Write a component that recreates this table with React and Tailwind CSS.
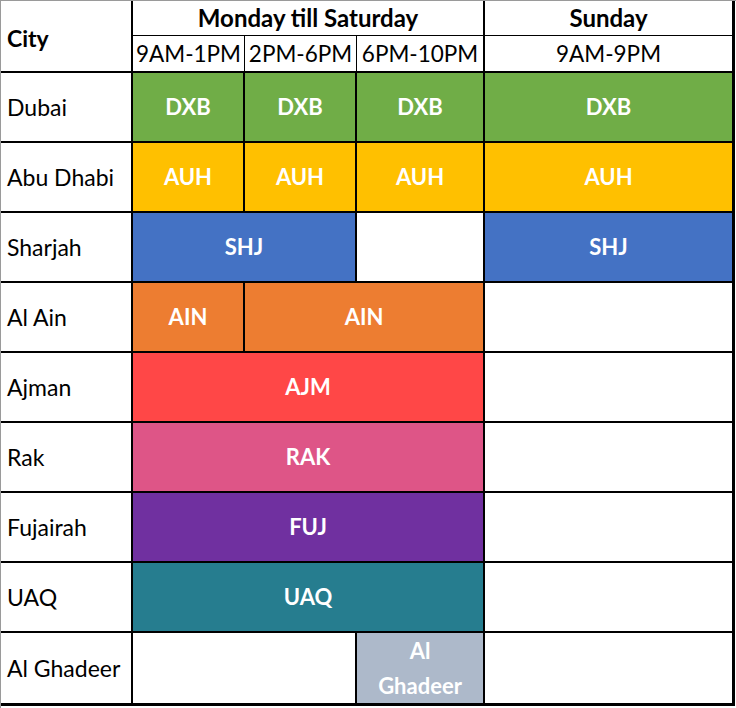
const rows = [
  { city: 'Dubai', cells: [
    { text: 'DXB', bg: 'bg-[#70ad47]' },
    { text: 'DXB', bg: 'bg-[#70ad47]' },
    { text: 'DXB', bg: 'bg-[#70ad47]' },
    { text: 'DXB', bg: 'bg-[#70ad47]', thick: true },
  ] },
  { city: 'Abu Dhabi', cells: [
    { text: 'AUH', bg: 'bg-[#ffc000]' },
    { text: 'AUH', bg: 'bg-[#ffc000]' },
    { text: 'AUH', bg: 'bg-[#ffc000]' },
    { text: 'AUH', bg: 'bg-[#ffc000]', thick: true },
  ] },
  { city: 'Sharjah', cells: [
    { text: 'SHJ', bg: 'bg-[#4472c4]', span: 2 },
    { text: '', bg: 'bg-white' },
    { text: 'SHJ', bg: 'bg-[#4472c4]', thick: true },
  ] },
  { city: 'Al Ain', cells: [
    { text: 'AIN', bg: 'bg-[#ed7d31]' },
    { text: 'AIN', bg: 'bg-[#ed7d31]', span: 2 },
    { text: '', bg: 'bg-white', thick: true },
  ] },
  { city: 'Ajman', cells: [
    { text: 'AJM', bg: 'bg-[#ff4747]', span: 3 },
    { text: '', bg: 'bg-white', thick: true },
  ] },
  { city: 'Rak', cells: [
    { text: 'RAK', bg: 'bg-[#de5587]', span: 3 },
    { text: '', bg: 'bg-white', thick: true },
  ] },
  { city: 'Fujairah', cells: [
    { text: 'FUJ', bg: 'bg-[#7030a0]', span: 3 },
    { text: '', bg: 'bg-white', thick: true },
  ] },
  { city: 'UAQ', cells: [
    { text: 'UAQ', bg: 'bg-[#267d8f]', span: 3 },
    { text: '', bg: 'bg-white', thick: true },
  ] },
  { city: 'Al Ghadeer', cells: [
    { text: '', bg: 'bg-white', span: 2 },
    { text: 'Al Ghadeer', bg: 'bg-[#adb9ca]', wrap: true },
    { text: '', bg: 'bg-white', thick: true },
  ] },
];

export default function App() {
  return (
    <div className="w-[736px] h-[708px] bg-white border-t border-l border-[#9a9a9a] font-['Lato','Liberation_Sans',sans-serif] text-black overflow-hidden">
      <table className="table-fixed border-separate border-spacing-0 w-[734px]">
        <colgroup>
          <col className="w-[132px]" />
          <col className="w-[112px]" />
          <col className="w-[112px]" />
          <col className="w-[128px]" />
          <col className="w-[250px]" />
        </colgroup>
        <thead>
          <tr className="h-[35px]">
            <th rowSpan={2} className="border-r-2 border-b-2 border-black text-left align-middle pl-[6px] pt-[4px] text-[23px] leading-[28px] font-bold">
              City
            </th>
            <th colSpan={3} className="border-r-2 border-b border-black text-center text-[24px] leading-[28px] font-bold">
              Monday till Saturday
            </th>
            <th className="border-r-[3px] border-b border-black text-center text-[24px] leading-[28px] font-bold">
              Sunday
            </th>
          </tr>
          <tr className="h-[37px]">
            <th className="border-r border-b-2 border-black text-center text-[22.5px] leading-[28px] font-normal whitespace-nowrap">9AM-1PM</th>
            <th className="border-r border-b-2 border-black text-center text-[22.5px] leading-[28px] font-normal whitespace-nowrap">2PM-6PM</th>
            <th className="border-r-2 border-b-2 border-black text-center text-[22.5px] leading-[28px] font-normal whitespace-nowrap">6PM-10PM</th>
            <th className="border-r-[3px] border-b-2 border-black text-center text-[22.5px] leading-[28px] font-normal">9AM-9PM</th>
          </tr>
        </thead>
        <tbody>
          {rows.map((row, i) => {
            const last = i === rows.length - 1;
            const bottom = last ? 'border-b-[3px]' : 'border-b-2';
            return (
              <tr key={row.city} className="h-[70px]">
                <td className={`border-r-2 ${bottom} border-black pl-[6px] text-[23px] leading-[30px] align-middle whitespace-nowrap`}>
                  {row.city}
                </td>
                {row.cells.map((cell, j) => (
                  <td
                    key={j}
                    colSpan={cell.span || 1}
                    className={`${cell.thick ? 'border-r-[3px]' : 'border-r-2'} ${bottom} border-black ${cell.bg} text-center align-middle text-white font-bold text-[22px] ${cell.wrap ? 'leading-[35px] px-4' : 'leading-[30px]'}`}
                  >
                    {cell.text}
                  </td>
                ))}
              </tr>
            );
          })}
        </tbody>
      </table>
    </div>
  );
}
